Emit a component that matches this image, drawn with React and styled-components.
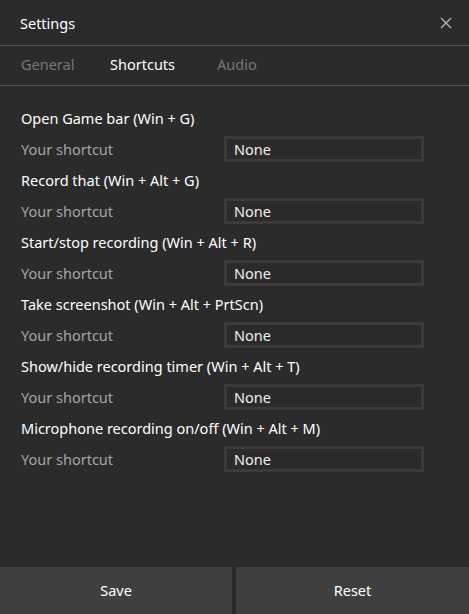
import styled, { createGlobalStyle } from "styled-components";

const GlobalStyle = createGlobalStyle`
  html, body {
    margin: 0;
    padding: 0;
    background: #2b2b2b;
  }
  body {
    font-family: "Noto Sans", "Open Sans", sans-serif;
  }
`;

const Window = styled.div`
  width: 469px;
  height: 614px;
  display: flex;
  flex-direction: column;
  background: #2b2b2b;
  color: #fff;
  overflow: hidden;
`;

const Header = styled.div`
  height: 46px;
  box-sizing: border-box;
  display: flex;
  align-items: center;
  justify-content: space-between;
  padding: 0 13px 0 20px;
  border-bottom: 1px solid #555;

  h1 {
    margin: 0;
    font-size: 14.5px;
    font-weight: 400;
  }
`;

const CloseButton = styled.button`
  background: none;
  border: none;
  padding: 0;
  width: 20px;
  height: 20px;
  display: flex;
  align-items: center;
  justify-content: center;
`;

const Tabs = styled.div`
  height: 40px;
  box-sizing: border-box;
  display: flex;
  align-items: center;
  padding: 0 0 3px 21px;
  border-bottom: 1px solid #555;
`;

const Tab = styled.div`
  font-size: 14.5px;
  color: ${(p) => (p.$active ? "#fff" : "#777")};
  width: ${(p) => p.$w}px;
`;

const Content = styled.div`
  flex: 1;
  padding: 22px 45px 0 21px;
  display: flex;
  flex-direction: column;
`;

const Group = styled.div`
  display: flex;
  flex-direction: column;
`;

const Title = styled.div`
  font-size: 14.5px;
  height: 20px;
  line-height: 20px;
  margin-bottom: 8px;
`;

const Row = styled.div`
  display: flex;
  align-items: center;
  justify-content: space-between;
  height: 26px;
  margin-bottom: 8px;
`;

const Label = styled.div`
  font-size: 14.5px;
  color: #a5a5a5;
`;

const ShortcutBox = styled.div`
  width: 200px;
  height: 26px;
  box-sizing: border-box;
  border: 3px solid #3b3b3b;
  background: #2b2b2b;
  padding: 0 7px 1px;
  display: flex;
  align-items: center;
  font-size: 14.5px;
  color: #f0f0f0;
`;

const Footer = styled.div`
  height: 47px;
  display: flex;
  gap: 4px;
`;

const FooterButton = styled.button`
  flex: ${(p) => p.$grow};
  border: none;
  background: #3f3f3f;
  color: #fff;
  font-family: inherit;
  font-size: 14.5px;
  padding: 0 0 2px;
`;

const shortcuts = [
  "Open Game bar (Win + G)",
  "Record that (Win + Alt + G)",
  "Start/stop recording (Win + Alt + R)",
  "Take screenshot (Win + Alt + PrtScn)",
  "Show/hide recording timer (Win + Alt + T)",
  "Microphone recording on/off (Win + Alt + M)",
];

export default function App() {
  return (
    <>
      <GlobalStyle />
      <Window>
        <Header>
          <h1>Settings</h1>
          <CloseButton aria-label="Close">
            <svg width="12" height="12" viewBox="0 0 12 12">
              <path d="M1 1 L11 11 M11 1 L1 11" stroke="#bbb" strokeWidth="1.3" />
            </svg>
          </CloseButton>
        </Header>
        <Tabs>
          <Tab $w={89}>General</Tab>
          <Tab $w={107} $active>
            Shortcuts
          </Tab>
          <Tab $w={60}>Audio</Tab>
        </Tabs>
        <Content>
          {shortcuts.map((s) => (
            <Group key={s}>
              <Title>{s}</Title>
              <Row>
                <Label>Your shortcut</Label>
                <ShortcutBox>None</ShortcutBox>
              </Row>
            </Group>
          ))}
        </Content>
        <Footer>
          <FooterButton $grow={232}>Save</FooterButton>
          <FooterButton $grow={233}>Reset</FooterButton>
        </Footer>
      </Window>
    </>
  );
}
